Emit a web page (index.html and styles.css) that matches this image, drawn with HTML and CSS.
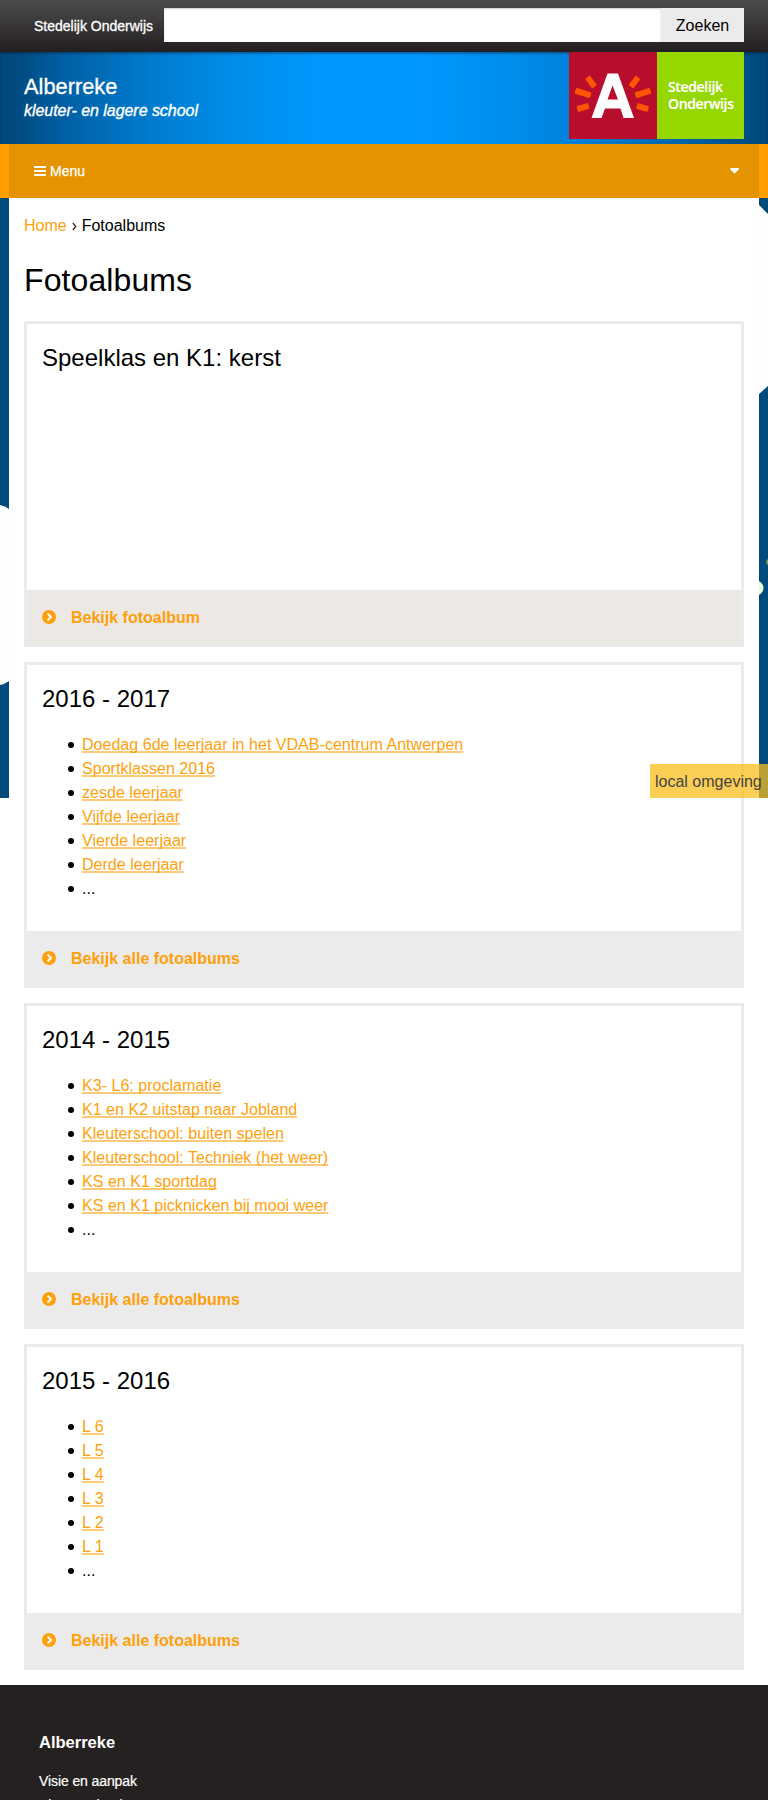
FILE: index.html
```html
<!DOCTYPE html>
<html lang="nl">
<head>
<meta charset="utf-8">
<title>Fotoalbums - Alberreke</title>
<link rel="stylesheet" href="styles.css">
</head>
<body>
<svg class="backdrop" width="768" height="600" viewBox="0 198 768 600" aria-hidden="true">
  <rect y="198" width="768" height="600" fill="#004a7c"/>
  <path d="M0 505Q5 506 9 509V681Q5 684 0 685Z" fill="#fdfffe"/>
  <path d="M759 205L768 214V386L759 394Z" fill="#fdfffe"/>
  <circle cx="756" cy="588" r="7.5" fill="#e4fbd9"/>
  <circle cx="769" cy="562" r="3" fill="#6e9b52"/>
</svg>
<header>
  <div class="topbar">
    <a class="network">Stedelijk Onderwijs</a>
    <form class="search"><input type="text" aria-label="Zoeken"><button type="button">Zoeken</button></form>
  </div>
  <div class="banner">
    <div class="brand"><div class="name">Alberreke</div><div class="tagline">kleuter- en lagere school</div></div>
    <div class="logo">
      <svg width="88" height="87" viewBox="0 0 88 87" aria-hidden="true">
        <path fill="#fff" fill-rule="evenodd" d="M38.500 21.500H49L65 66H54.500L51.500 56.500H36L32.500 66H22.500ZM43.500 33.500L38.500 47.500H49Z"/>
        <g fill="#ff5500">
          <rect x="-6" y="-3" width="12" height="6" rx="1" transform="translate(22 30) rotate(53)"/>
          <rect x="-8" y="-3" width="16" height="6" rx="1" transform="translate(14 41) rotate(18)"/>
          <rect x="-6" y="-3" width="12" height="6" rx="1" transform="translate(14 55.500) rotate(-16)"/>
          <rect x="-6" y="-3" width="12" height="6" rx="1" transform="translate(65.500 30) rotate(-53)"/>
          <rect x="-8" y="-3" width="16" height="6" rx="1" transform="translate(74 41) rotate(-18)"/>
          <rect x="-6" y="-3" width="12" height="6" rx="1" transform="translate(73.500 55.500) rotate(16)"/>
        </g>
      </svg>
      <div class="logo-text">Stedelijk<br>Onderwijs</div>
    </div>
  </div>
  <nav class="menu"><div class="menu-inner">
    <svg width="12" height="11" viewBox="0 0 12 11" aria-hidden="true"><path d="M0 1H12M0 5H12M0 9H12" stroke="#fff" stroke-width="2"/></svg>
    <span>Menu</span>
    <svg class="caret" width="9" height="6" viewBox="0 0 9 6" aria-hidden="true"><path d="M.3 0H8.700V1.500L4.500 5.700L.3 1.500Z" fill="#fff"/></svg>
  </div></nav>
</header>
<main>
  <div class="crumbs"><a>Home</a><svg width="5" height="9" viewBox="0 0 5 9" aria-hidden="true"><path d="M.8 1L3.800 4.500L.8 8" fill="none" stroke="#222" stroke-width="1.200"/></svg><span>Fotoalbums</span></div>
  <h1>Fotoalbums</h1>
  <section class="card single">
    <div class="body"><h2>Speelklas en K1: kerst</h2></div>
    <a class="more"><svg width="14" height="14" viewBox="0 0 14 14"><circle cx="7" cy="7" r="7" fill="#ff9f0a"/><path d="M5.500 3.500L9 7L5.500 10.500" fill="none" stroke="#fff" stroke-width="2"/></svg><span>Bekijk fotoalbum</span></a>
  </section>
  <section class="card">
    <div class="body"><h2>2016 - 2017</h2>
      <ul><li><a>Doedag 6de leerjaar in het VDAB-centrum Antwerpen</a></li><li><a>Sportklassen 2016</a></li><li><a>zesde leerjaar</a></li><li><a>Vijfde leerjaar</a></li><li><a>Vierde leerjaar</a></li><li><a>Derde leerjaar</a></li><li>...</li></ul></div>
    <a class="more"><svg width="14" height="14" viewBox="0 0 14 14"><circle cx="7" cy="7" r="7" fill="#ff9f0a"/><path d="M5.500 3.500L9 7L5.500 10.500" fill="none" stroke="#fff" stroke-width="2"/></svg><span>Bekijk alle fotoalbums</span></a>
  </section>
  <section class="card">
    <div class="body"><h2>2014 - 2015</h2>
      <ul><li><a>K3- L6: proclamatie</a></li><li><a>K1 en K2 uitstap naar Jobland</a></li><li><a>Kleuterschool: buiten spelen</a></li><li><a>Kleuterschool: Techniek (het weer)</a></li><li><a>KS en K1 sportdag</a></li><li><a>KS en K1 picknicken bij mooi weer</a></li><li>...</li></ul></div>
    <a class="more"><svg width="14" height="14" viewBox="0 0 14 14"><circle cx="7" cy="7" r="7" fill="#ff9f0a"/><path d="M5.500 3.500L9 7L5.500 10.500" fill="none" stroke="#fff" stroke-width="2"/></svg><span>Bekijk alle fotoalbums</span></a>
  </section>
  <section class="card">
    <div class="body"><h2>2015 - 2016</h2>
      <ul><li><a>L 6</a></li><li><a>L 5</a></li><li><a>L 4</a></li><li><a>L 3</a></li><li><a>L 2</a></li><li><a>L 1</a></li><li>...</li></ul></div>
    <a class="more"><svg width="14" height="14" viewBox="0 0 14 14"><circle cx="7" cy="7" r="7" fill="#ff9f0a"/><path d="M5.500 3.500L9 7L5.500 10.500" fill="none" stroke="#fff" stroke-width="2"/></svg><span>Bekijk alle fotoalbums</span></a>
  </section>
</main>
<footer>
  <h3>Alberreke</h3>
  <a>Visie en aanpak</a>
  <a>Kleuterschool</a>
</footer>
<div class="env">local omgeving</div>
</body>
</html>
```
FILE: styles.css
```css
* { box-sizing: border-box; }
body { margin: 0; position: relative; height: 1800px; overflow: hidden; background: #fff; color: #000; font: 16px/24px "Liberation Sans", Arial, sans-serif; }
svg { display: block; flex: none; }
.backdrop { position: absolute; top: 198px; left: 0; z-index: -1; }
.topbar { height: 52px; display: flex; align-items: center; padding: 0 24px 2px 34px; background: linear-gradient(#4d4b4c, #231f20); }
.network { width: 130px; color: #fff; font-size: 14px; padding-top: 2px; -webkit-text-stroke: .3px #fff; white-space: nowrap; }
.search { display: flex; flex: 1; height: 34px; }
.search input { flex: 1; min-width: 0; border: 0; padding: 0 8px; background: #fff; box-shadow: inset 0 1px 2px #ccc; }
.search button { width: 83px; border: 0; padding: 2px 0 0; background: #ebebeb; color: #000; font: 16px "Liberation Sans", Arial, sans-serif; }
.banner { height: 92px; display: flex; justify-content: space-between; padding: 0 24px; background: linear-gradient(90deg, #00477a 0, #004c82 20px, #0060a6 65px, #007bce 150px, #008ee9 235px, #0098ff 320px, #0098ff 420px, #008fee 500px, #0084de 565px, #0064a8 680px, #004f86 744px, #00477a 768px); box-shadow: inset 0 2px 2px rgba(0, 20, 40, .35); }
.brand { color: #fff; padding-top: 22px; -webkit-text-stroke: .35px #fff; }
.name { font-size: 21.8px; line-height: 26px; }
.tagline { font-style: italic; line-height: 22px; letter-spacing: -.04px; }
.logo { display: flex; width: 175px; height: 87px; background: linear-gradient(90deg, #b90d2d 88px, #97d700 88px); }
.logo-text { padding: 26px 0 0 11px; color: #fff; font: 600 14px/17px "Open Sans", sans-serif; letter-spacing: -.35px; -webkit-text-stroke: .2px #fff; }
.menu { height: 54px; padding: 0 9px; background: #ff9f00; }
.menu-inner { height: 54px; display: flex; align-items: center; gap: 4px; padding: 0 20px 0 25px; background: #e59300; color: #fff; font-size: 14px; -webkit-text-stroke: .25px #fff; }
.caret { margin-left: auto; }
main { height: 1487px; margin: 0 9px; padding: 16px 15px 0; background: #fff; }
.crumbs { display: flex; align-items: center; gap: 5px; height: 24px; }
.crumbs a { color: #ff9f0a; }
h1, h2, h3 { margin: 0; font-weight: normal; }
h1 { margin-top: 22px; font-size: 32px; line-height: 40px; letter-spacing: .1px; }
.card { height: 326px; margin-bottom: 15px; border: 3px solid #ebebeb; display: flex; flex-direction: column; }
h1 + .card { margin-top: 21px; }
.body { flex: 1; padding: 18px 15px 0; }
h2 { font-size: 24px; line-height: 32px; }
ul { margin: 18px 0 0; padding-left: 40px; list-style: none; }
li::before { content: ""; float: left; width: 6px; height: 6px; margin: 9px 0 0 -14px; border-radius: 50%; background: #000; }
li a { color: #ff9f0a; text-decoration: underline; text-decoration-color: #ffcb7a; text-decoration-thickness: 2px; text-underline-offset: 1px; text-decoration-skip-ink: none; letter-spacing: .03px; }
.more { height: 54px; display: flex; align-items: center; gap: 15px; padding: 0 15px; background: #ebebeb; color: #ff9f0a; font-weight: bold; }
.more span { padding-top: 1px; }
.single .more { background: #ece8e4; }
footer { height: 115px; padding: 45px 39px 0; overflow: hidden; background: #242120; color: #fff; }
footer h3 { font-size: 16.5px; line-height: 24px; font-weight: bold; margin-bottom: 15px; }
footer a { display: block; font-size: 14px; line-height: 24px; letter-spacing: -.1px; -webkit-text-stroke: .2px #fff; }
.env { position: absolute; top: 764px; right: 0; width: 118px; height: 34px; padding: 6px 5px 4px; line-height: 24px; white-space: nowrap; color: #444; background: rgba(250, 190, 30, .75); }
```
